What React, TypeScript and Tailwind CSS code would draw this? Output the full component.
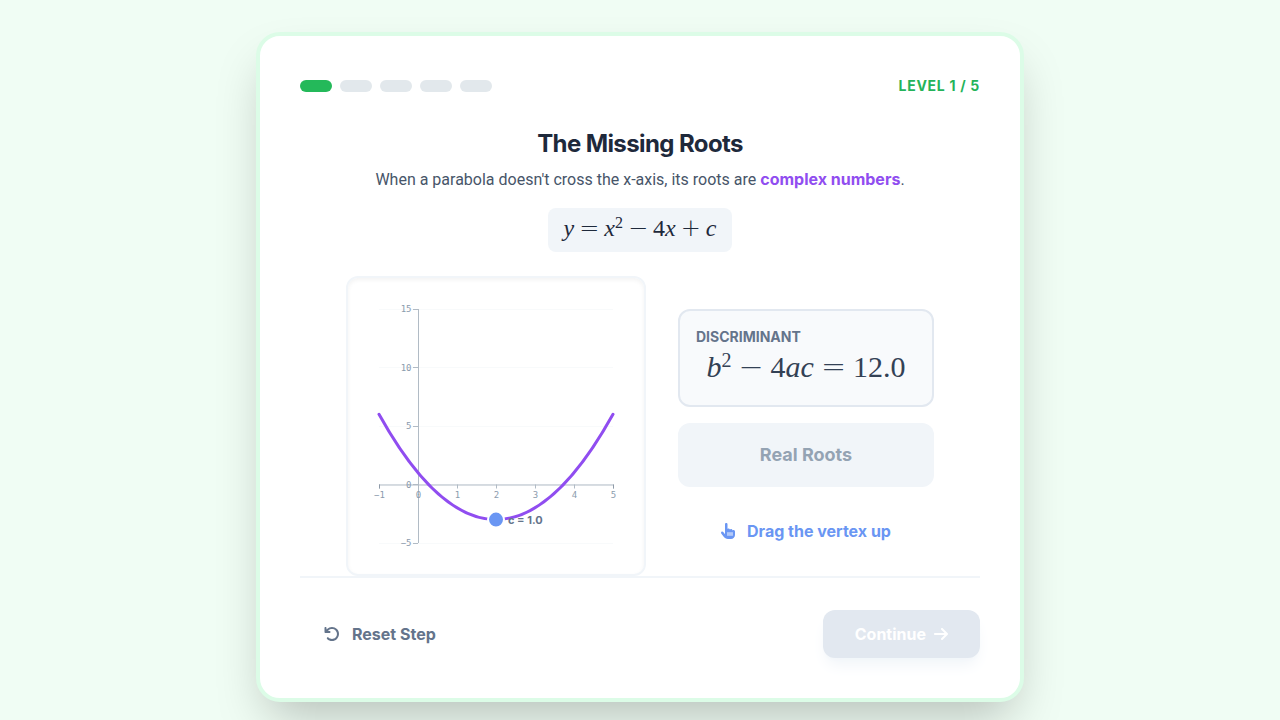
// src/App.tsx
import type { ReactNode } from "react";
import { FaArrowRight, FaArrowRotateLeft, FaHandPointer } from "react-icons/fa6";

const LEVEL = 1;
const LEVELS = [1, 2, 3, 4, 5];
const C = 1;

const xTicks = [-1, 0, 1, 2, 3, 4, 5];
const yTicks = [-5, 0, 5, 10, 15];

const SIZE = 296;
const PAD = 31;
const INNER = SIZE - PAD * 2;

const sx = (x: number) => PAD + ((x + 1) / 6) * INNER;
const sy = (y: number) => PAD + ((15 - y) / 20) * INNER;
const px = (v: number) => Math.floor(v) + 0.5;
const label = (n: number) => String(n).replace("-", "\u2212");

function Graph({ c }: { c: number }) {
  const f = (x: number) => x * x - 4 * x + c;
  // the tangents at x = -1 and x = 5 meet at (2, f(-1) - 18)
  const curve = `M${sx(-1)},${sy(f(-1))} Q${sx(2)},${sy(f(-1) - 18)} ${sx(5)},${sy(f(5))}`;

  return (
    <svg viewBox={`0 0 ${SIZE} ${SIZE}`} className="block w-full" role="img" aria-label="Parabola graph">
      {yTicks.map((t) => (
        <line key={t} x1={sx(-1)} x2={sx(5)} y1={px(sy(t))} y2={px(sy(t))} stroke="#f8fafb" />
      ))}

      <g stroke="#b1bbc5">
        <line x1={sx(-1)} x2={sx(5)} y1={px(sy(0)) + 0.5} y2={px(sy(0)) + 0.5} />
        <line x1={px(sx(0))} x2={px(sx(0))} y1={sy(15)} y2={sy(-5)} />
        {xTicks.map((t) => (
          <line key={t} x1={px(sx(t))} x2={px(sx(t))} y1={sy(0)} y2={sy(0) + 4} />
        ))}
        {yTicks.map((t) => (
          <line key={t} x1={sx(0) - 5} x2={sx(0)} y1={px(sy(t))} y2={px(sy(t))} />
        ))}
        <line x1={px(sx(-1))} x2={px(sx(-1))} y1={sy(0)} y2={sy(0) + 4} stroke="#8e9aa8" />
        <line x1={px(sx(5))} x2={px(sx(5))} y1={sy(0)} y2={sy(0) + 4} stroke="#8e9aa8" />
      </g>

      <g className="fill-[#8b9bad] font-['DejaVu_Sans_Mono',monospace] text-[9px]">
        {xTicks.map((t) => (
          <text key={t} x={px(sx(t))} y={sy(0) + 13} textAnchor="middle">
            {label(t)}
          </text>
        ))}
        {yTicks.map((t) => (
          <text key={t} x={px(sx(0)) - 7} y={sy(t) + 3} textAnchor="end">
            {label(t)}
          </text>
        ))}
      </g>

      <path d={curve} fill="none" stroke="#904df0" strokeWidth="3" strokeLinecap="round" />
      <circle cx={sx(2)} cy={sy(f(2))} r="8" fill="#6a96f3" stroke="#fff" strokeWidth="2" />
      <text x={sx(2) + 12} y={sy(f(2)) + 4} className="fill-[#64748b] text-[11px] font-bold">
        c = {c.toFixed(1)}
      </text>
    </svg>
  );
}

function Op({ children }: { children: ReactNode }) {
  return <span className="font-['DejaVu_Sans',sans-serif] leading-none font-extralight">{children}</span>;
}

function Formula({ className, children }: { className: string; children: ReactNode }) {
  return (
    <div className={`flex items-baseline justify-center font-['Liberation_Serif',serif] whitespace-nowrap ${className}`}>
      {children}
    </div>
  );
}

export default function App() {
  return (
    <main className="flex min-h-screen items-center justify-center bg-green-50 p-8 font-['Inter',sans-serif]">
      <div className="w-full max-w-3xl rounded-3xl border-4 border-[#dcfce7] bg-white p-10 shadow-2xl">
        <header className="mb-8 flex items-center justify-between">
          <div className="flex gap-2">
            {LEVELS.map((n) => (
              <div key={n} className={n <= LEVEL ? "h-3 w-8 rounded-full bg-[#24b95a]" : "h-3 w-8 rounded-full bg-[#e2e8ec]"} />
            ))}
          </div>
          <span className="text-sm font-bold tracking-wider text-[#24b35a] uppercase">
            Level {LEVEL} / {LEVELS.length}
          </span>
        </header>

        <section className="mb-6 flex flex-col items-center text-center">
          <h1 className="mb-2 text-2xl font-bold tracking-tight text-[#1e293b]">The Missing Roots</h1>
          <p className="font-['Roboto',sans-serif] text-base text-[#475569]">
            When a parabola doesn't cross the x-axis, its roots are{" "}
            <strong className="font-['Inter',sans-serif] leading-none font-bold text-[#904df0]">complex numbers</strong>.
          </p>
          <div className="mt-4 flex h-11 items-center rounded-lg bg-[#f1f5f9] px-4 pb-1">
            <Formula className="gap-[5px] text-2xl text-[#1e293b]">
              <i>y</i>
              <Op>=</Op>
              <span>
                <i>x</i>
                <sup className="text-base">2</sup>
              </span>
              <Op>−</Op>
              <span>
                4<i>x</i>
              </span>
              <Op>+</Op>
              <i>c</i>
            </Formula>
          </div>
        </section>

        <section className="flex flex-wrap items-center justify-center gap-8">
          <div className="w-75 rounded-xl border-2 border-[#f1f5f9] bg-white shadow-inner">
            <Graph c={C} />
          </div>

          <div className="flex w-64 flex-col gap-4">
            <div className="rounded-xl border-2 border-[#e2e8f0] bg-[#f8fafc] p-4">
              <h2 className="text-sm font-bold text-[#64748b] uppercase">Discriminant</h2>
              <Formula className="h-10.5 gap-[7px] pt-0.5 text-3xl text-[#334155]">
                <span>
                  <i>b</i>
                  <sup className="text-xl">2</sup>
                </span>
                <Op>−</Op>
                <span>
                  4<i>ac</i>
                </span>
                <Op>=</Op>
                <span>{(16 - 4 * C).toFixed(1)}</span>
              </Formula>
            </div>
            <div className="flex h-16 items-center justify-center rounded-xl bg-[#f1f5f9] text-lg font-bold text-[#94a3b3]">
              Real Roots
            </div>
            <p className="flex items-center justify-center gap-3 pt-4 text-base font-bold text-[#6a96f3]">
              <FaHandPointer className="h-4 w-3.5" />
              Drag the vertex up
            </p>
          </div>
        </section>

        <footer className="flex items-center justify-between border-t-2 border-[#f1f5f9] pt-8">
          <button type="button" className="flex h-12 items-center gap-3 rounded-xl px-6 font-bold text-[#64748b]">
            <FaArrowRotateLeft />
            Reset Step
          </button>
          <button
            type="button"
            disabled
            className="flex h-12 items-center gap-2 rounded-xl bg-[#e2e8f0] px-8 font-bold text-white shadow-lg shadow-slate-100"
          >
            Continue
            <FaArrowRight className="h-4 w-3.5" />
          </button>
        </footer>
      </div>
    </main>
  );
}
